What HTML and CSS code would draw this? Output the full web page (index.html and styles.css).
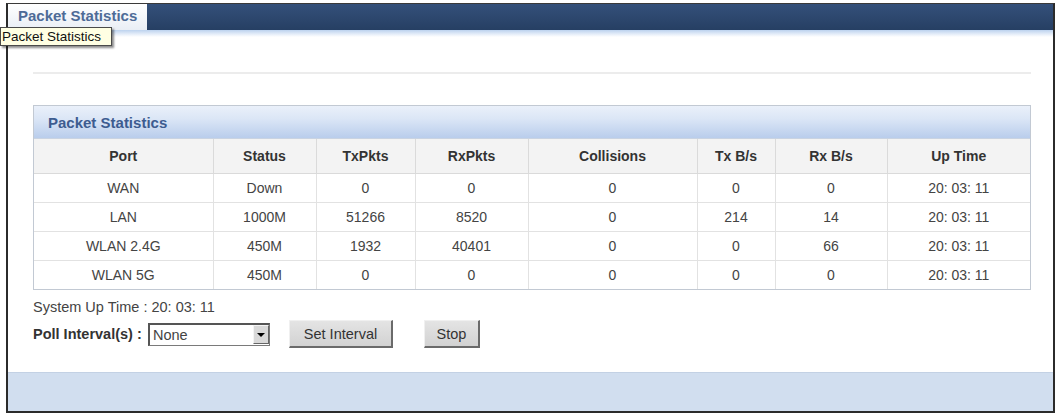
FILE: index.html
```html
<!DOCTYPE html>
<html>
<head>
<meta charset="utf-8">
<title>Packet Statistics</title>
<link rel="stylesheet" href="styles.css">
</head>
<body>
<div class="frame">
  <div class="topbar">
    <div class="tab">Packet Statistics</div>
    <div class="bar"></div>
  </div>
  <div class="strip"></div>
  <div class="content">
    <div class="rule"></div>
    <div class="panel">
      <div class="panel-head">Packet Statistics</div>
      <table class="stats">
        <colgroup>
          <col class="c1"><col class="c2"><col class="c3"><col class="c4">
          <col class="c5"><col class="c6"><col class="c7"><col class="c8">
        </colgroup>
        <thead>
          <tr><th>Port</th><th>Status</th><th>TxPkts</th><th>RxPkts</th><th>Collisions</th><th>Tx B/s</th><th>Rx B/s</th><th>Up Time</th></tr>
        </thead>
        <tbody>
          <tr><td>WAN</td><td>Down</td><td>0</td><td>0</td><td>0</td><td>0</td><td>0</td><td>20: 03: 11</td></tr>
          <tr><td>LAN</td><td>1000M</td><td>51266</td><td>8520</td><td>0</td><td>214</td><td>14</td><td>20: 03: 11</td></tr>
          <tr><td>WLAN 2.4G</td><td>450M</td><td>1932</td><td>40401</td><td>0</td><td>0</td><td>66</td><td>20: 03: 11</td></tr>
          <tr><td>WLAN 5G</td><td>450M</td><td>0</td><td>0</td><td>0</td><td>0</td><td>0</td><td>20: 03: 11</td></tr>
        </tbody>
      </table>
    </div>
    <div class="uptime">System Up Time : 20: 03: 11</div>
    <div class="poll">
      <span class="poll-label">Poll Interval(s) :</span>
      <div class="select"><span class="select-val">None</span><span class="select-btn"><span class="tri"></span></span></div>
      <button class="btn btn-set">Set Interval</button>
      <button class="btn btn-stop">Stop</button>
    </div>
  </div>
  <div class="footer"></div>
</div>
<div class="tooltip">Packet Statistics</div>
</body>
</html>
```
FILE: styles.css
```css
html, body {
  margin: 0;
  padding: 0;
  background: #ffffff;
  font-family: "Liberation Sans", Arial, sans-serif;
}

.frame {
  margin: 3px 4px 0 6px;
  height: 410px;
  box-sizing: border-box;
  border: 2px solid #2b2b2b;
  border-top: 1px solid #3a3a3a;
  display: flex;
  flex-direction: column;
  background: #fff;
}

.topbar {
  display: flex;
  height: 26px;
}

.tab {
  width: 139px;
  box-sizing: border-box;
  padding: 3px 0 0 10px;
  font-size: 15px;
  font-weight: bold;
  color: #4e6b97;
  background: linear-gradient(#ffffff, #e9eef5);
}

.bar {
  flex: 1;
  background: linear-gradient(#34507a, #263f63);
}

.strip {
  height: 7px;
  background: linear-gradient(#bcd2ee, #e6eef9 60%, #ffffff);
}

.content {
  padding: 35px 22px 0 25px;
}

.rule {
  height: 2px;
  background: #ececec;
}

.panel {
  margin-top: 31px;
  border: 1px solid #c2c9d3;
}

.panel-head {
  height: 33px;
  box-sizing: border-box;
  padding: 8px 0 0 14px;
  font-size: 15px;
  font-weight: bold;
  color: #3d5c90;
  background: linear-gradient(#eaf0fa, #dbe6f6 40%, #b9cdec);
  border-bottom: 1px solid #c9d3e2;
}

.stats {
  width: 100%;
  border-collapse: collapse;
  table-layout: fixed;
  font-size: 14px;
  color: #444;
}

.c1 { width: 179px; }
.c2 { width: 103px; }
.c3 { width: 99px; }
.c4 { width: 113px; }
.c5 { width: 169px; }
.c6 { width: 78px; }
.c7 { width: 112px; }
.c8 { width: 143px; }

.stats th {
  height: 34px;
  padding: 0;
  font-weight: bold;
  color: #333;
  background: #f3f3f3;
  border-left: 1px solid #dadada;
  border-bottom: 1px solid #dadada;
  text-align: center;
}

.stats td {
  height: 28px;
  padding: 0;
  text-align: center;
  border-left: 1px solid #e2e2e2;
  border-bottom: 1px solid #e2e2e2;
}

.stats tr th:first-child,
.stats tr td:first-child {
  border-left: none;
}

.stats tbody tr:last-child td {
  border-bottom: none;
}

.uptime {
  margin-top: 9px;
  font-size: 14.5px;
  line-height: 16px;
  color: #444;
}

.poll {
  margin-top: 5px;
  display: flex;
  align-items: center;
  height: 28px;
}

.poll-label {
  font-size: 14.5px;
  font-weight: bold;
  color: #333;
  width: 115px;
}

.select {
  width: 122px;
  height: 23px;
  box-sizing: border-box;
  border: 1px solid #7a7a7a;
  border-top: 2px solid #555;
  border-left: 2px solid #555;
  display: flex;
  align-items: center;
  background: #fff;
}

.select-val {
  flex: 1;
  font-size: 14.5px;
  color: #444;
  padding-left: 3px;
}

.select-btn {
  width: 16px;
  height: 19px;
  box-sizing: border-box;
  background: #d9d9d9;
  border: 1px solid #f4f4f4;
  border-right-color: #666;
  border-bottom-color: #666;
  display: flex;
  align-items: center;
  justify-content: center;
}

.tri {
  width: 0;
  height: 0;
  border-left: 4px solid transparent;
  border-right: 4px solid transparent;
  border-top: 4px solid #000;
}

.btn {
  height: 28px;
  box-sizing: border-box;
  font-family: "Liberation Sans", Arial, sans-serif;
  font-size: 14.5px;
  color: #333;
  background: linear-gradient(#e4e4e4, #d2d2d2);
  border: 1px solid #f0f0f0;
  border-right: 2px solid #6a6a6a;
  border-bottom: 2px solid #6a6a6a;
  padding: 0;
}

.btn-set {
  margin-left: 19px;
  width: 104px;
}

.btn-stop {
  margin-left: 31px;
  width: 56px;
}

.footer {
  margin-top: auto;
  height: 38px;
  background: #d1deef;
  border-top: 1px solid #c3d1e4;
}

.tooltip {
  position: absolute;
  left: 0;
  top: 27px;
  width: 112px;
  height: 19px;
  box-sizing: border-box;
  padding: 1px 0 0 1px;
  background: #ffffe3;
  border: 1px solid #4a4a4a;
  box-shadow: 2px 2px 2px rgba(0, 0, 0, 0.45);
  font-size: 13.5px;
  line-height: 16px;
  color: #111;
  white-space: nowrap;
}
```
